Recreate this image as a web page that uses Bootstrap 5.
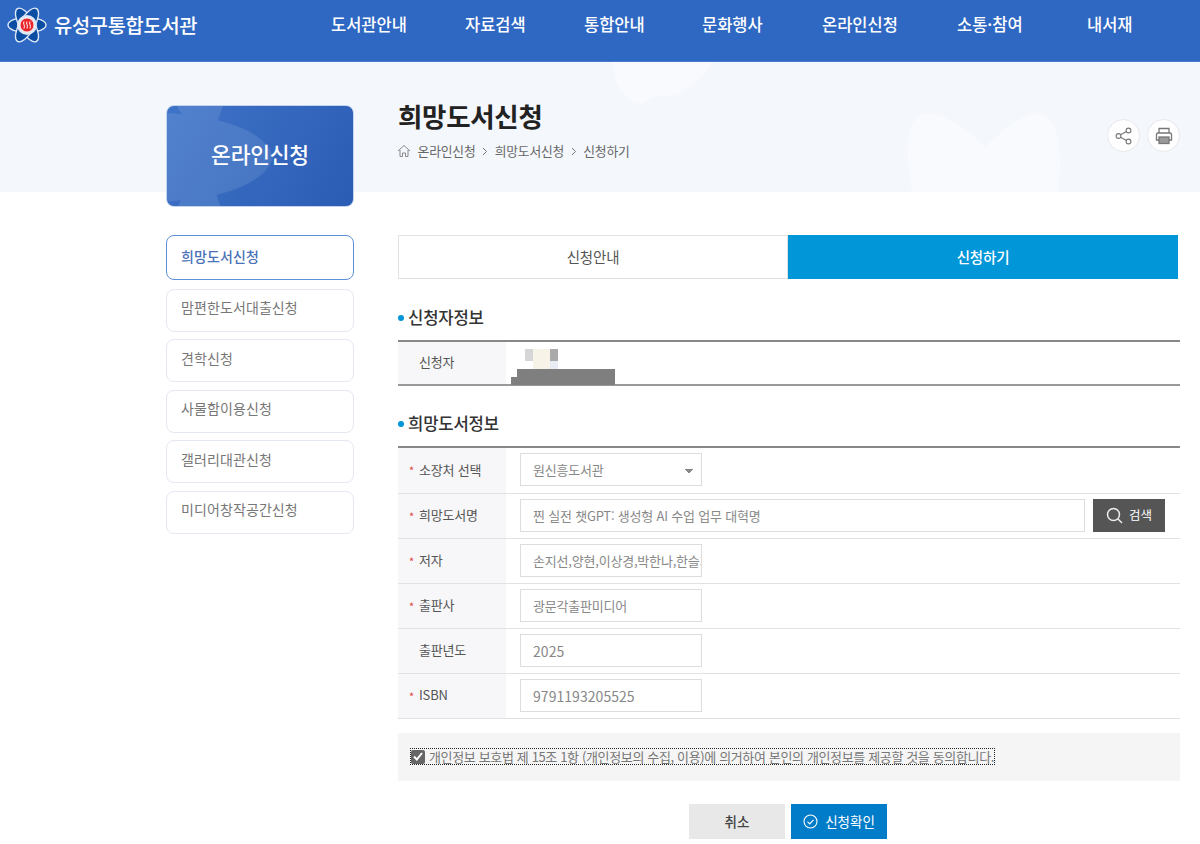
<!DOCTYPE html>
<html lang="ko"><head><meta charset="utf-8"><title>희망도서신청</title>
<link href="https://cdn.jsdelivr.net/npm/bootstrap@5.3.0/dist/css/bootstrap.min.css" rel="stylesheet">
<style>
html,body{height:844px;overflow:hidden}
body{font-family:"Noto Sans CJK KR","Noto Sans",sans-serif;color:#555;font-size:13px;letter-spacing:-.2px;background:#fff}
.topbar{height:62px;background:#2f68c3;border-bottom:1px solid #4a7bcb;color:#fff}
.brand{width:331px;padding:0 0 12px 7px;gap:7px;font-size:19.8px;font-weight:500;letter-spacing:-.3px;color:#fff}
.menu{font-size:16.5px;font-weight:500;color:#fff;letter-spacing:0}
.menu a{color:#fff;text-decoration:none;position:absolute;top:13px;white-space:nowrap;line-height:22px}
.menu{position:relative;flex:1;height:61px}
.stage{position:relative;background:linear-gradient(#f4f7fc 130px,#fff 130px);padding:43px 20px 0 166px;height:782px;overflow:hidden}
.deco{position:absolute;left:0;top:0;pointer-events:none}
.sidecol{width:188px;flex:none;position:relative}
.sidehead{height:102px;border-radius:8px;background:linear-gradient(120deg,#3f74c8,#2a5cb3);border:1px solid #c3d4ec;color:#fff;font-size:21.5px;font-weight:500;position:relative;overflow:hidden;padding-bottom:3px}
.sidehead span{position:relative}
.sidehead svg{position:absolute;left:0;top:0}
.sidelist{margin-top:28px;gap:7.5px}
.sidelink{height:43px;border:1px solid #e3e8f2;border-radius:8px;background:#fff;padding:0 0 5px 14px;color:#777;font-size:14px;letter-spacing:.1px;text-decoration:none;display:flex;align-items:center}
.sidelink.on{height:45px;margin-bottom:1px;padding-bottom:3px;border-color:#5f8fd8;color:#4a72b8;font-weight:500}
.maincol{margin-left:44px;flex:1;min-width:0;position:relative}
.pagehead{height:136px;position:relative}
.pagetitle{font-size:26.5px;font-weight:700;color:#222;line-height:34px;margin:-6px 0 0;letter-spacing:-.3px}
.crumbs{font-size:12.8px;color:#666;gap:6.6px;margin:9px 0 0 -1px;line-height:18px}
.tools{position:absolute;right:0;top:20px;gap:7px}
.toolbtn{width:33px;height:33px;border-radius:50%;background:#fff;border:1px solid #e8e8ea;padding:0;display:flex;align-items:center;justify-content:center}
.tabrow{width:780px;height:44px}
.tabitem{flex:1;display:flex;align-items:center;justify-content:center;font-size:14.5px;border:1px solid #e2e2e2;color:#555;text-decoration:none}
.tabitem.on{background:#0096d8;border-color:#0096d8;color:#fff;font-weight:500}
.sectitle{font-size:16.7px;font-weight:500;color:#333;line-height:24px;padding-left:10px;position:relative;margin:0}
.sectitle::before{content:"";position:absolute;left:0;top:10px;width:6px;height:6px;border-radius:50%;background:#0096d8}
.formtable{width:100%;border-top:2px solid #888;margin:0}
.formtable th{width:108px;background:#f7f7f9;font-weight:400;font-size:13px;color:#555;padding:0 0 2px 21px;vertical-align:middle;white-space:nowrap;position:relative}
.formtable td{padding:0 14px;vertical-align:middle}
.formtable td.firstcell{padding-bottom:2px}
.formtable tr{border-bottom:1px solid #e2e2e2}
.redstar{color:#e23b3b;position:absolute;left:11px;top:50%;transform:translateY(-46%);font-size:11px}
.ctl{height:33px;width:182px;border:1px solid #ddd;border-radius:0;padding:0 0 0 12px;font-size:13px;color:#888;box-shadow:none;letter-spacing:-.2px;background-color:#fff}
.ctl.num{font-size:14px;letter-spacing:.05px}
.ctl.wide{width:565px}
select.ctl{appearance:none;background-image:linear-gradient(45deg,transparent 50%,#888 50%),linear-gradient(-45deg,transparent 50%,#888 50%);background-size:5px 4px,5px 4px;background-position:right 12px top 15px,right 7px top 15px;background-repeat:no-repeat}
.findbtn{height:33px;width:72px;background:#555;color:#fff;border:0;border-radius:0;font-size:12.5px;gap:6px;margin-left:8px;padding:0}
.mosaic{position:absolute;left:0;top:0;width:0;height:0}
.px{position:absolute;display:block}
.consent{height:48px;background:#f5f5f5;margin-top:14px;padding-left:13px;color:#777;font-size:13px;letter-spacing:-.36px}
.consentin{outline:1px dotted #222;outline-offset:0;line-height:14px;gap:4px;height:15px}
.tick{width:14px;height:14px;background:#666;border-radius:2px;display:flex;align-items:center;justify-content:center;flex:none}
.actions{gap:6px;margin-top:23px;padding-right:2px}
.actbtn{height:35px;border-radius:0;border:0;font-size:13.5px;padding:0;display:flex;align-items:center;justify-content:center}
.actbtn.cancel{width:96px;background:#e8e8e8;color:#444;font-weight:500}
.actbtn.go{width:96px;background:#007cc8;color:#fff;gap:7px}
</style></head><body>
<header class="topbar d-flex align-items-center">
 <a class="brand d-flex align-items-center text-decoration-none" href="#">
  <svg width="40" height="36" viewBox="0 0 40 36"><g fill="#0a4da2" stroke="#dfe8f5" stroke-width="1.4"><ellipse cx="20" cy="18" rx="19" ry="7.500"/><ellipse cx="20" cy="18" rx="19" ry="7.500" transform="rotate(60 20 18)"/><ellipse cx="20" cy="18" rx="19" ry="7.500" transform="rotate(120 20 18)"/></g><circle cx="20" cy="18" r="10" fill="#dfe8f5"/><circle cx="20" cy="18" r="7" fill="#e8262c" stroke="#fff" stroke-width=".8"/><path d="M17 14.500c-1.500 2 1.500 4-0 7M20 14.500c-1.500 2 1.500 4-0 7M23 14.500c-1.500 2 1.500 4-0 7" fill="none" stroke="#fff" stroke-width="1"/></svg>
  <span>유성구통합도서관</span></a>
 <nav class="menu">
  <a href="#" style="left:0">도서관안내</a><a href="#" style="left:134px">자료검색</a><a href="#" style="left:253px">통합안내</a><a href="#" style="left:371px">문화행사</a><a href="#" style="left:491px">온라인신청</a><a href="#" style="left:626px">소통·참여</a><a href="#" style="left:756px">내서재</a>
 </nav>
</header>
<div class="stage d-flex">
 <svg class="deco" width="1200" height="130" viewBox="0 0 1200 130"><g fill="#f8fafd"><path d="M912 130C905 90 905 55 925 52 945 50 970 70 985 85 1000 70 1025 48 1042 52 1062 58 1062 100 1058 130z"/><path d="M612 0C615 20 620 38 640 42 650 38 660 32 668 34 680 36 700 20 712 0z"/></g></svg>
 <aside class="sidecol">
  <div class="sidehead d-flex align-items-center justify-content-center"><svg width="188" height="102" viewBox="0 0 188 102"><g fill="#fff" opacity=".1"><path d="M0 7c60 4 100 20 106 44-6 24-46 42-106 44z"/><path d="M10 0h46L37 51 54 102H10l28-51z"/></g></svg><span>온라인신청</span></div>
  <nav class="sidelist d-flex flex-column">
   <a class="sidelink on" href="#">희망도서신청</a><a class="sidelink" href="#">맘편한도서대출신청</a><a class="sidelink" href="#">견학신청</a><a class="sidelink" href="#">사물함이용신청</a><a class="sidelink" href="#">갤러리대관신청</a><a class="sidelink" href="#">미디어창작공간신청</a>
  </nav>
 </aside>
 <main class="maincol">
  <div class="pagehead">
   <h1 class="pagetitle">희망도서신청</h1>
   <div class="crumbs d-flex align-items-center">
    <svg width="14" height="14" viewBox="0 0 14 14" fill="none" stroke="#888" stroke-width="1"><path d="M1 7l6-5.500L13 7M3 6v6.500h2.500V9h3v3.500H11V6"/></svg>
    <span>온라인신청</span><svg width="6" height="9" viewBox="0 0 6 9" fill="none" stroke="#777"><path d="M1 1l3.500 3.500L1 8"/></svg><span>희망도서신청</span><svg width="6" height="9" viewBox="0 0 6 9" fill="none" stroke="#777"><path d="M1 1l3.500 3.500L1 8"/></svg><span>신청하기</span>
   </div>
   <div class="tools d-flex">
    <button class="toolbtn" aria-label="공유"><svg width="18" height="18" viewBox="0 0 18 18" fill="none" stroke="#777" stroke-width="1.100"><circle cx="13.500" cy="3.500" r="2.400"/><circle cx="13.500" cy="14.500" r="2.400"/><circle cx="3.500" cy="9" r="2.400"/><path d="M5.600 7.800l5.800-3.200M5.600 10.200l5.800 3.200"/></svg></button>
    <button class="toolbtn" aria-label="인쇄"><svg width="20" height="20" viewBox="0 0 20 20" fill="none" stroke="#777" stroke-width="1.300"><path d="M5 7V2.500h10V7M5 14H2.500V8.500A1.500 1.500 0 0 1 4 7h12a1.500 1.500 0 0 1 1.500 1.500V14H15"/><rect x="5" y="11" width="10" height="6.500" fill="#999"/></svg></button>
   </div>
  </div>
  <div class="tabrow d-flex"><a class="tabitem" href="#">신청안내</a><a class="tabitem on" href="#">신청하기</a></div>
  <h2 class="sectitle" style="margin-top:26px">신청자정보</h2>
  <table class="formtable" style="margin-top:11px;position:relative"><tr style="height:44px;border-bottom:2px solid #999"><th>신청자</th><td style="position:relative"><span class="mosaic"><i class="px" style="left:19px;top:7px;width:8px;height:12px;background:#d6d6d6"></i><i class="px" style="left:27px;top:7px;width:17px;height:20px;background:#f8f3e8"></i><i class="px" style="left:44px;top:7px;width:8px;height:12px;background:#aaa"></i><i class="px" style="left:44px;top:19px;width:8px;height:8px;background:#e8edf5"></i><i class="px" style="left:11px;top:27px;width:98px;height:8px;background:#7f7f7f"></i><i class="px" style="left:5px;top:35px;width:104px;height:8px;background:#7f7f7f"></i></span></td></tr></table>
  <h2 class="sectitle" style="margin-top:25px">희망도서정보</h2>
  <table class="formtable" style="margin-top:11px">
   <tr style="height:46px"><th><span class="redstar">*</span>소장처 선택</th><td class="firstcell"><select class="ctl form-select d-block"><option>원신흥도서관</option></select></td></tr>
   <tr style="height:45px"><th><span class="redstar">*</span>희망도서명</th><td><div class="d-flex"><input class="ctl wide form-control" value="찐 실전 챗GPT: 생성형 AI 수업 업무 대혁명"><button class="findbtn btn d-flex align-items-center justify-content-center"><svg width="17" height="17" viewBox="0 0 17 17" fill="none" stroke="#eee" stroke-width="1.500"><circle cx="7.500" cy="7.500" r="6"/><path d="M12 12l4 4"/></svg>검색</button></div></td></tr>
   <tr style="height:45px"><th><span class="redstar">*</span>저자</th><td><input class="ctl form-control" value="손지선,양현,이상경,박한나,한슬기"></td></tr>
   <tr style="height:45px"><th><span class="redstar">*</span>출판사</th><td><input class="ctl form-control" value="광문각출판미디어"></td></tr>
   <tr style="height:45px"><th>출판년도</th><td><input class="ctl num form-control" value="2025"></td></tr>
   <tr style="height:45px"><th><span class="redstar">*</span>ISBN</th><td><input class="ctl num form-control" value="9791193205525"></td></tr>
  </table>
  <div class="consent d-flex align-items-center"><label class="consentin d-flex align-items-center"><span class="tick"><svg width="10" height="9" viewBox="0 0 10 9" fill="none" stroke="#fff" stroke-width="2"><path d="M1 4.500l2.800 3L9 1"/></svg></span>개인정보 보호법 제 15조 1항 (개인정보의 수집, 이용)에 의거하여 본인의 개인정보를 제공할 것을 동의합니다.</label></div>
  <div class="actions d-flex justify-content-center">
   <button class="actbtn cancel btn">취소</button>
   <button class="actbtn go btn"><svg width="15" height="15" viewBox="0 0 15 15" fill="none" stroke="#fff" stroke-width="1.100"><circle cx="7.500" cy="7.500" r="6.500"/><path d="M4.500 7.700l2.200 2.200 3.800-4"/></svg>신청확인</button>
  </div>
 </main>
</div>
</body></html>
